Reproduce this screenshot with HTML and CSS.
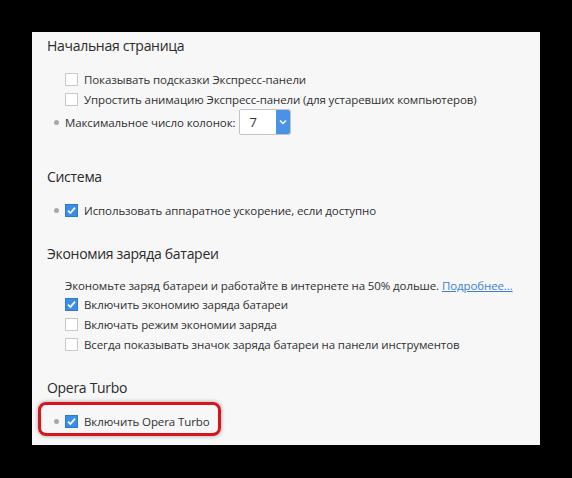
FILE: index.html
```html
<!DOCTYPE html>
<html lang="ru">
<head>
    <meta charset="UTF-8">
    <title>Настройки браузера</title>
    <link rel="stylesheet" href="styles.css">
</head>
<body>
    <div class="panel">
        <!-- Начальная страница -->
        <div class="section first">
            <h2>Начальная страница</h2>
            <div class="row">
                <span class="dot"></span>
                <span class="box"></span>
                <span>Показывать подсказки Экспресс-панели</span>
            </div>
            <div class="row">
                <span class="dot"></span>
                <span class="box"></span>
                <span>Упростить анимацию Экспресс-панели (для устаревших компьютеров)</span>
            </div>
            <div class="row select-row">
                <span class="dot on"></span>
                <span>Максимальное число колонок:</span>
                <span class="select">
                    <span class="select-value">7</span>
                    <span class="select-arrow">
                        <svg width="8" height="6" viewBox="0 0 8 6"><path d="M1 1.5 L4 4.5 L7 1.5" fill="none" stroke="#fff" stroke-width="1.5"/></svg>
                    </span>
                </span>
            </div>
        </div>

        <!-- Система -->
        <div class="section">
            <h2>Система</h2>
            <div class="row">
                <span class="dot on"></span>
                <span class="box checked"><svg width="11" height="11" viewBox="0 0 11 11"><path d="M2 5.6 L4.4 8 L9 2.6" fill="none" stroke="#fff" stroke-width="1.7"/></svg></span>
                <span>Использовать аппаратное ускорение, если доступно</span>
            </div>
        </div>

        <!-- Батарея -->
        <div class="section">
            <h2>Экономия заряда батареи</h2>
            <p class="desc">Экономьте заряд батареи и работайте в интернете на 50% дольше. <a href="#">Подробнее...</a></p>
            <div class="row">
                <span class="dot"></span>
                <span class="box checked"><svg width="11" height="11" viewBox="0 0 11 11"><path d="M2 5.6 L4.4 8 L9 2.6" fill="none" stroke="#fff" stroke-width="1.7"/></svg></span>
                <span>Включить экономию заряда батареи</span>
            </div>
            <div class="row">
                <span class="dot"></span>
                <span class="box"></span>
                <span>Включать режим экономии заряда</span>
            </div>
            <div class="row">
                <span class="dot"></span>
                <span class="box"></span>
                <span>Всегда показывать значок заряда батареи на панели инструментов</span>
            </div>
        </div>

        <!-- Opera Turbo -->
        <div class="section">
            <h2>Opera Turbo</h2>
            <div class="row marked">
                <span class="dot on"></span>
                <span class="box checked"><svg width="11" height="11" viewBox="0 0 11 11"><path d="M2 5.6 L4.4 8 L9 2.6" fill="none" stroke="#fff" stroke-width="1.7"/></svg></span>
                <span>Включить Opera Turbo</span>
                <span class="highlight"></span>
            </div>
        </div>
    </div>
</body>
</html>
```

FILE: styles.css
```css
body {
    margin: 0;
    background-color: #000;
    font-family: "Open Sans", "Noto Sans", sans-serif;
    color: #2e2e2e;
}
.panel {
    margin: 32px 0 0 32px;
    width: 493px;
    height: 413px;
    padding: 0 0 0 15px;
    background-color: #f7f7f8;
    box-sizing: content-box;
}
.section { padding-top: 24px; }
.section.first { padding-top: 4px; }
h2 {
    margin: 0 0 13px 0;
    font-size: 14px;
    letter-spacing: -0.3px;
    font-weight: normal;
    line-height: 20px;
    color: #2a2a2a;
}
.row {
    display: flex;
    align-items: center;
    height: 20px;
    font-size: 11.5px;
    letter-spacing: -0.1px;
    color: #303030;
}
.dot {
    width: 18px;
    display: flex;
    justify-content: center;
}
.dot.on::before {
    content: "";
    width: 5px;
    height: 5px;
    border-radius: 50%;
    background-color: #a8a8a8;
}
.box {
    width: 11px;
    height: 11px;
    border: 1px solid #c9c9c9;
    background-color: #fff;
    margin-right: 6px;
    display: flex;
}
.box.checked {
    background-color: #3a8ee6;
    border-color: #3079c9;
}
.select-row {
    height: 26px;
    margin-bottom: 8px;
}
.select {
    display: flex;
    margin-left: 4px;
    height: 24px;
    border: 1px solid #c3c3c3;
    border-radius: 2px;
    background-color: #fff;
}
.select-value {
    width: 36px;
    padding-left: 9px;
    line-height: 24px;
    font-size: 13px;
    box-sizing: border-box;
}
.select-arrow {
    width: 14px;
    background-color: #4a92e6;
    display: flex;
    align-items: center;
    justify-content: center;
    border-radius: 0 2px 2px 0;
}
.desc {
    margin: 0 0 0 18px;
    font-size: 11.5px;
    letter-spacing: -0.1px;
    line-height: 17px;
    color: #303030;
}
.desc a { color: #3b7fd4; }
.marked { position: relative; }
.highlight {
    position: absolute;
    left: -9px;
    top: -9px;
    width: 177px;
    height: 28px;
    border: 3px solid #d8141c;
    border-radius: 8px;
    box-shadow: 0 0 4px rgba(0, 0, 0, 0.35);
}
```
